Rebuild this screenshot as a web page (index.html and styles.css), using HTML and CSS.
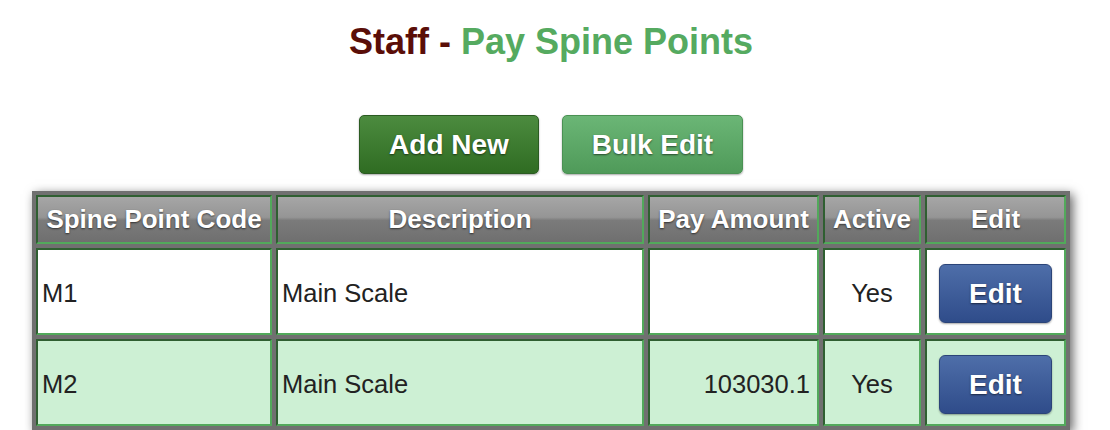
FILE: index.html
```html
<!DOCTYPE html>
<html lang="en">
<head>
    <meta charset="UTF-8">
    <meta name="viewport" content="width=device-width, initial-scale=1.0">
    <title>Staff - Pay Spine Points</title>
    <link rel="stylesheet" href="styles.css">
</head>
<body>
    <div class="page">
        <h1 class="page-title"><span class="title-section">Staff -</span> <span class="title-name">Pay Spine Points</span></h1>

        <div class="actions">
            <button class="btn btn-add">Add New</button>
            <button class="btn btn-bulk">Bulk Edit</button>
        </div>

        <table class="grid">
            <thead>
                <tr>
                    <th class="col-code">Spine Point Code</th>
                    <th class="col-desc">Description</th>
                    <th class="col-amount">Pay Amount</th>
                    <th class="col-active">Active</th>
                    <th class="col-edit">Edit</th>
                </tr>
            </thead>
            <tbody>
                <tr>
                    <td>M1</td>
                    <td>Main Scale</td>
                    <td class="num"></td>
                    <td class="center">Yes</td>
                    <td class="center"><button class="btn-edit">Edit</button></td>
                </tr>
                <tr class="alt">
                    <td>M2</td>
                    <td>Main Scale</td>
                    <td class="num">103030.1</td>
                    <td class="center">Yes</td>
                    <td class="center"><button class="btn-edit">Edit</button></td>
                </tr>
            </tbody>
        </table>
    </div>
</body>
</html>
```

FILE: styles.css
```css
body {
    margin: 0;
    font-family: "Liberation Sans", Arial, sans-serif;
    background-color: #ffffff;
    color: #222222;
}
.page {
    width: 1102px;
}
.page-title {
    margin: 21px 0 0;
    text-align: center;
    font-size: 36px;
    font-weight: bold;
    line-height: 41px;
}
.title-section {
    color: #5a0e08;
}
.title-name {
    color: #55aa60;
}
.actions {
    display: flex;
    justify-content: center;
    gap: 23px;
    margin-top: 53px;
}
.btn {
    height: 59px;
    border-radius: 5px;
    font-family: inherit;
    font-size: 28px;
    font-weight: bold;
    color: #ffffff;
    text-shadow: 0 1px 2px rgba(0,0,0,0.55);
    box-shadow: 0 1px 2px rgba(0,0,0,0.35);
    cursor: pointer;
}
.btn-add {
    width: 180px;
    border: 1px solid #2b5b22;
    background: linear-gradient(to bottom, #4c8b3f, #2f6c22);
}
.btn-bulk {
    width: 181px;
    border: 1px solid #4a9153;
    background: linear-gradient(to bottom, #6bb676, #4f9a59);
}
.grid {
    margin: 17px auto 0;
    width: 1038px;
    table-layout: fixed;
    border-collapse: separate;
    border-spacing: 4px;
    background-color: #707070;
    box-shadow: 3px 3px 10px rgba(0,0,0,0.6);
    font-size: 25.5px;
}
.grid th,
.grid td {
    box-sizing: border-box;
    border: 2px solid;
    border-color: #2f5f31 #52a95b #52a95b #2f5f31;
    padding: 0 4px;
}
.grid th {
    height: 49px;
    color: #ffffff;
    font-size: 26px;
    font-weight: bold;
    text-align: center;
    text-shadow: 0 1px 2px rgba(0,0,0,0.6);
    background: linear-gradient(to bottom, #a6a6a6 0%, #959595 45%, #7b7b7b 52%, #6f6f6f 100%);
    white-space: nowrap;
}
.grid td {
    height: 87px;
    padding-top: 4px;
    background-color: #ffffff;
    text-align: left;
}
.grid tr.alt td {
    background-color: #cdf0d4;
}
.col-code { width: 236px; }
.col-desc { width: 368px; }
.col-amount { width: 171px; }
.col-active { width: 98px; }
.col-edit { width: 141px; }
.grid td.num {
    text-align: right;
    padding-right: 7px;
}
.grid td.center {
    text-align: center;
}
.btn-edit {
    width: 113px;
    height: 59px;
    margin-top: 0;
    border: 1px solid #2b4478;
    border-radius: 6px;
    background: linear-gradient(to bottom, #4e6ea9, #2f4c8a);
    color: #ffffff;
    font-family: inherit;
    font-size: 28px;
    font-weight: bold;
    text-shadow: 0 1px 2px rgba(0,0,0,0.55);
    box-shadow: 0 1px 2px rgba(0,0,0,0.35);
    cursor: pointer;
    vertical-align: middle;
}
```
